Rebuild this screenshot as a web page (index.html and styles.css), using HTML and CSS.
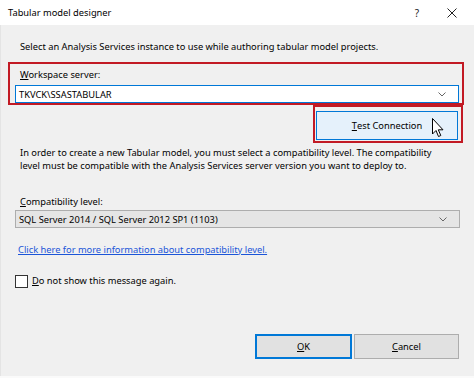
FILE: index.html
```html
<!DOCTYPE html>
<html>
<head>
<meta charset="utf-8">
<link rel="stylesheet" href="styles.css">
</head>
<body>
<div class="dialog">
  <div class="titlebar">
    <span class="title">Tabular model designer</span>
    <span class="tb-help">?</span>
    <svg class="tb-close" width="10" height="10" viewBox="0 0 10 10"><path d="M0.5 0.5 L9.5 9.5 M9.5 0.5 L0.5 9.5" stroke="#222" stroke-width="1" fill="none"/></svg>
  </div>
  <div class="content">
    <div class="intro">Select an Analysis Services instance to use while authoring tabular model projects.</div>
    <div class="redbox ws-box">
      <div class="label"><u>W</u>orkspace server:</div>
      <div class="combo combo-edit">
        <span>TKVCK\SSASTABULAR</span>
        <svg class="chev" width="8" height="5" viewBox="0 0 8 5"><path d="M0.5 0.5 L4 4 L7.5 0.5" stroke="#666" stroke-width="1" fill="none"/></svg>
      </div>
    </div>
    <div class="redbox test-box">
      <div class="btn btn-hover"><u>T</u>est Connection</div>
    </div>
    <div class="para">In order to create a new Tabular model, you must select a compatibility level. The compatibility level must be compatible with the Analysis Services server version you want to deploy to.</div>
    <div class="label compat-label"><u>C</u>ompatibility level:</div>
    <div class="combo combo-list">
      <span>SQL Server 2014 / SQL Server 2012 SP1 (1103)</span>
      <svg class="chev" width="8" height="5" viewBox="0 0 8 5"><path d="M0.5 0.5 L4 4 L7.5 0.5" stroke="#666" stroke-width="1" fill="none"/></svg>
    </div>
    <div class="link">Click here for more information about compatibility level.</div>
    <div class="check-row">
      <span class="checkbox"></span>
      <span><u>D</u>o not show this message again.</span>
    </div>
    <div class="buttons">
      <div class="btn btn-ok"><u>O</u>K</div>
      <div class="btn btn-cancel"><u>C</u>ancel</div>
    </div>
  </div>
  <div class="bottom-edge"></div>
  <svg class="cursor" width="13" height="20" viewBox="0 0 13 20"><path d="M0.5 0.5 L0.5 16 L4 12.5 L6.5 18.5 L8.8 17.5 L6.3 11.8 L11 11.8 Z" fill="#fff" stroke="#000" stroke-width="1" stroke-linejoin="miter"/></svg>
</div>
</body>
</html>
```

FILE: styles.css
```css
* { box-sizing: border-box; }
html, body {
  margin: 0;
  padding: 0;
  width: 474px;
  height: 378px;
  overflow: hidden;
  background: #f0f0f0;
}
body {
  font-family: "Noto Sans", "Open Sans", sans-serif;
  font-size: 9.3px;
  color: #000;
}
.dialog {
  position: relative;
  width: 474px;
  height: 378px;
  display: flex;
  flex-direction: column;
}
.titlebar {
  height: 25px;
  background: #fff;
  display: flex;
  align-items: center;
  padding-left: 8px;
  flex: none;
}
.title { flex: 1; font-size: 9.3px; }
.tb-help { width: 8px; text-align: center; margin-right: 26px; font-size: 10px; color: #222; }
.tb-close { margin-right: 17px; }
.content {
  flex: 1;
  background: #f0f0f0;
  display: flex;
  flex-direction: column;
  border-left: 1px solid #e4e4e4;
}
.intro {
  margin-top: 15px;
  padding-left: 19px;
  line-height: 14px;
  height: 14px;
}
.redbox {
  border: 2px solid #c21a24;
}
.ws-box {
  margin-top: 8px;
  margin-left: 7px;
  width: 456px;
  height: 43px;
  padding-top: 4px;
}
.label {
  line-height: 14px;
  height: 14px;
  padding-left: 10px;
}
.combo {
  display: flex;
  align-items: center;
  height: 18px;
  padding-left: 3px;
  padding-right: 12px;
}
.combo span { flex: 1; }
.combo-edit {
  margin-top: 3px;
  margin-left: 5px;
  width: 444px;
  background: #fff;
  border: 1px solid #0078d7;
}
.test-box {
  margin-left: 312px;
  width: 150px;
  height: 38px;
  padding-top: 4px;
  padding-left: 1px;
}
.btn {
  display: flex;
  align-items: center;
  justify-content: center;
  height: 25px;
  border: 1px solid #adadad;
  background: #e1e1e1;
}
.btn-hover {
  width: 142px;
  height: 29px;
  background: #e5f1fb;
  border: 1px solid #0078d7;
}
.para {
  margin-top: 3px;
  margin-left: 19px;
  width: 428px;
  line-height: 13px;
}
.compat-label {
  margin-top: 23px;
  padding-left: 19px;
}
.combo-list {
  margin-top: 1px;
  margin-left: 14px;
  width: 445px;
  background: #e5e5e5;
  border: 1px solid #adadad;
}
.link {
  margin-top: 15px;
  padding-left: 17px;
  line-height: 14px;
  color: #1b55d8;
  text-decoration: underline;
}
.check-row {
  margin-top: 17px;
  padding-left: 14px;
  display: flex;
  align-items: center;
  line-height: 14px;
  gap: 4px;
}
.checkbox {
  width: 13px;
  height: 13px;
  background: #fff;
  border: 1px solid #333;
}
.buttons {
  margin-top: 46px;
  margin-left: 254px;
  display: flex;
  gap: 2px;
}
.btn-ok {
  width: 97px;
  border: 2px solid #0078d7;
}
.btn-cancel {
  width: 105px;
}
.bottom-edge {
  height: 2px;
  background: #fafafa;
  flex: none;
}
.cursor {
  position: absolute;
  left: 432px;
  top: 118px;
}
```
